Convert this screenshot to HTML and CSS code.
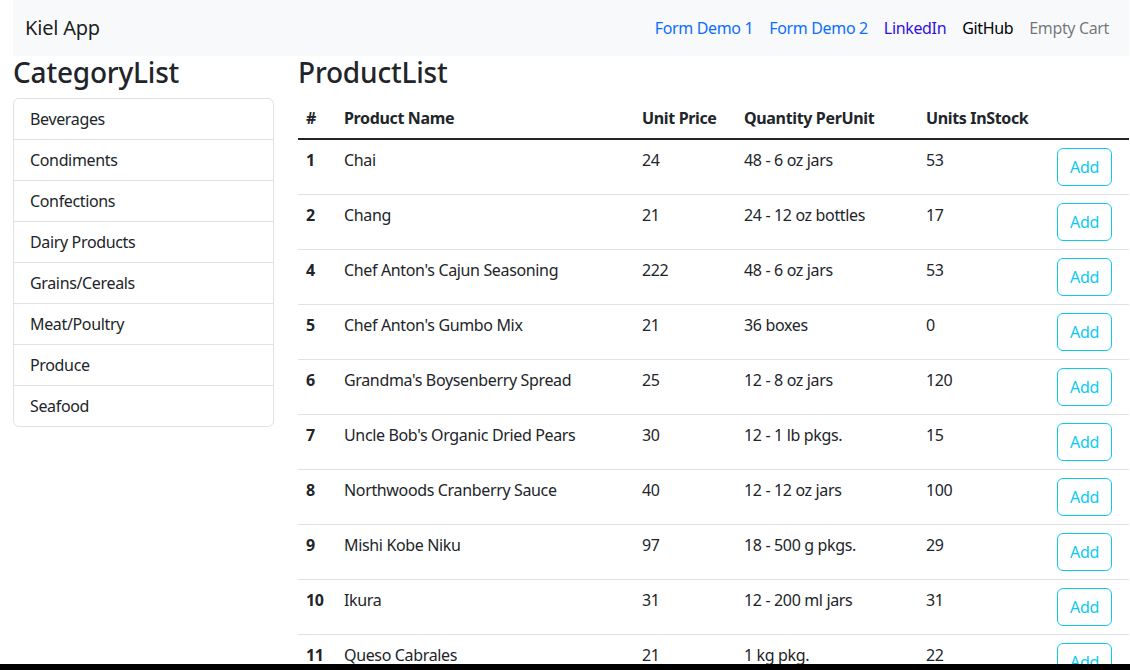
FILE: index.html
```html
<!DOCTYPE html>
<html lang="en">
<head>
<meta charset="utf-8">
<title>Kiel App</title>
<link rel="stylesheet" href="styles.css">
</head>
<body>
<div class="page">
  <nav class="navbar">
    <span class="brand">Kiel App</span>
    <div class="nav-links">
      <a class="nav-link link-primary">Form Demo 1</a>
      <a class="nav-link link-primary">Form Demo 2</a>
      <a class="nav-link link-violet">LinkedIn</a>
      <a class="nav-link link-dark">GitHub</a>
      <a class="nav-link link-muted">Empty Cart</a>
    </div>
  </nav>
  <div class="main">
    <aside class="sidebar">
      <h3 class="heading">CategoryList</h3>
      <ul class="list-group">
        <li class="list-item">Beverages</li>
        <li class="list-item">Condiments</li>
        <li class="list-item">Confections</li>
        <li class="list-item">Dairy Products</li>
        <li class="list-item">Grains/Cereals</li>
        <li class="list-item">Meat/Poultry</li>
        <li class="list-item">Produce</li>
        <li class="list-item">Seafood</li>
      </ul>
    </aside>
    <section class="content">
      <h3 class="heading">ProductList</h3>
      <table class="table">
        <colgroup>
          <col class="c-id"><col class="c-name"><col class="c-price"><col class="c-qty"><col class="c-stock"><col class="c-btn">
        </colgroup>
        <thead>
          <tr><th>#</th><th>Product Name</th><th>Unit Price</th><th>Quantity PerUnit</th><th>Units InStock</th><th></th></tr>
        </thead>
        <tbody>
          <tr><th>1</th><td>Chai</td><td>24</td><td>48 - 6 oz jars</td><td>53</td><td><button class="btn">Add</button></td></tr>
          <tr><th>2</th><td>Chang</td><td>21</td><td>24 - 12 oz bottles</td><td>17</td><td><button class="btn">Add</button></td></tr>
          <tr><th>4</th><td>Chef Anton's Cajun Seasoning</td><td>222</td><td>48 - 6 oz jars</td><td>53</td><td><button class="btn">Add</button></td></tr>
          <tr><th>5</th><td>Chef Anton's Gumbo Mix</td><td>21</td><td>36 boxes</td><td>0</td><td><button class="btn">Add</button></td></tr>
          <tr><th>6</th><td>Grandma's Boysenberry Spread</td><td>25</td><td>12 - 8 oz jars</td><td>120</td><td><button class="btn">Add</button></td></tr>
          <tr><th>7</th><td>Uncle Bob's Organic Dried Pears</td><td>30</td><td>12 - 1 lb pkgs.</td><td>15</td><td><button class="btn">Add</button></td></tr>
          <tr><th>8</th><td>Northwoods Cranberry Sauce</td><td>40</td><td>12 - 12 oz jars</td><td>100</td><td><button class="btn">Add</button></td></tr>
          <tr><th>9</th><td>Mishi Kobe Niku</td><td>97</td><td>18 - 500 g pkgs.</td><td>29</td><td><button class="btn">Add</button></td></tr>
          <tr><th>10</th><td>Ikura</td><td>31</td><td>12 - 200 ml jars</td><td>31</td><td><button class="btn">Add</button></td></tr>
          <tr><th>11</th><td>Queso Cabrales</td><td>21</td><td>1 kg pkg.</td><td>22</td><td><button class="btn">Add</button></td></tr>
        </tbody>
      </table>
    </section>
  </div>
</div>
<div class="bottom-bar"></div>
</body>
</html>
```
FILE: styles.css
```css
* { box-sizing: border-box; }
html, body { margin: 0; padding: 0; height: 100%; overflow: hidden; }
body {
  font-family: "Noto Sans", "Open Sans", sans-serif;
  font-size: 16px;
  line-height: 1.5;
  letter-spacing: -0.35px;
  color: #212529;
  background: #fff;
}
.page { padding-left: 13px; width: 1129px; }
.navbar {
  height: 56px;
  background: #f8f9fa;
  display: flex;
  align-items: center;
  justify-content: space-between;
  padding: 0 12px;
}
.brand { font-size: 20px; color: rgba(0,0,0,.9); line-height: 30px; letter-spacing: -0.2px; }
.nav-links { display: flex; }
.nav-link { padding: 8px; text-decoration: none; cursor: pointer; }
.link-primary { color: #0d6efd; }
.link-violet { color: #3311dd; }
.link-dark { color: #000; }
.link-muted { color: rgba(0,0,0,.55); }
.main { display: flex; gap: 24px; }
.sidebar { width: 261px; flex: none; }
.content { width: 831px; flex: none; }
.heading {
  font-size: 28px;
  font-weight: 500;
  line-height: 1.2;
  letter-spacing: -0.2px;
  margin: 0 0 8px;
}
.list-group {
  list-style: none;
  margin: 0;
  padding: 0;
  border: 1px solid #dee2e6;
  border-radius: 6px;
}
.list-item {
  padding: 8px 16px;
  border-bottom: 1px solid #dee2e6;
  line-height: 24px;
}
.list-item:last-child { border-bottom: 0; }
.table {
  width: 100%;
  border-collapse: collapse;
  table-layout: fixed;
}
.c-id { width: 38px; }
.c-name { width: 298px; }
.c-price { width: 102px; }
.c-qty { width: 182px; }
.c-stock { width: 131px; }
.c-btn { width: 80px; }
.table th, .table td {
  padding: 8px;
  text-align: left;
  vertical-align: top;
  line-height: 24px;
  white-space: nowrap;
  border-bottom: 1px solid #dee2e6;
}
.table th { font-weight: 700; }
.table thead th { border-bottom: 2px solid #212529; }
.btn {
  font-family: inherit;
  font-size: 16px;
  line-height: 24px;
  letter-spacing: -0.35px;
  padding: 6px 12px;
  width: 55px;
  color: #0dcaf0;
  background: transparent;
  border: 1px solid #0dcaf0;
  border-radius: 6px;
  cursor: pointer;
}
.bottom-bar {
  position: fixed;
  left: 0;
  right: 0;
  bottom: 0;
  height: 6px;
  background: #000;
}
```
